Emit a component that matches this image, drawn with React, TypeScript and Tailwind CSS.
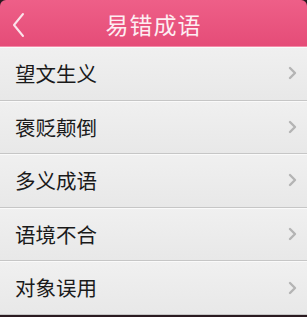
const items = ['望文生义', '褒贬颠倒', '多义成语', '语境不合', '对象误用'];

function Chevron() {
  return (
    <svg width="9" height="14" viewBox="0 0 9 14" className="shrink-0">
      <path d="M2 2 L7 7 L2 12" fill="none" stroke="#b4b4b4" strokeWidth="2.4" strokeLinecap="round" strokeLinejoin="round" />
    </svg>
  );
}

export default function App() {
  return (
    <div className="w-[307px] h-[317px] overflow-hidden bg-[#2a1a20]" style={{ fontFamily: '"Noto Sans CJK SC", "Noto Sans", sans-serif' }}>
      <div className="relative h-[47px] flex items-center justify-center rounded-t-[6px] bg-gradient-to-b from-[#ee5f88] to-[#e54c78] border-b border-[#f48aa8]">
        <svg width="16" height="26" viewBox="0 0 16 26" className="absolute left-[11px] top-[12px]">
          <path d="M12 2 L3 13 L12 24" fill="none" stroke="#fbe3ea" strokeWidth="2" strokeLinecap="round" strokeLinejoin="round" />
        </svg>
        <span className="pt-[3px] text-[23px] leading-none tracking-[1px] text-[#fdeef2]">易错成语</span>
      </div>
      <div className="bg-[#e6e6e6]">
        {items.map((t) => (
          <div key={t} className="h-[53.6px] flex items-center justify-between pl-[15px] pr-[10px] bg-gradient-to-b from-[#f0f0f0] to-[#e8e8e8] border-b border-[#c6c6c6] shadow-[inset_0_1px_0_#fafafa]">
            <span className="text-[20.5px] leading-none text-[#1a1a1a]">{t}</span>
            <Chevron />
          </div>
        ))}
      </div>
    </div>
  );
}
